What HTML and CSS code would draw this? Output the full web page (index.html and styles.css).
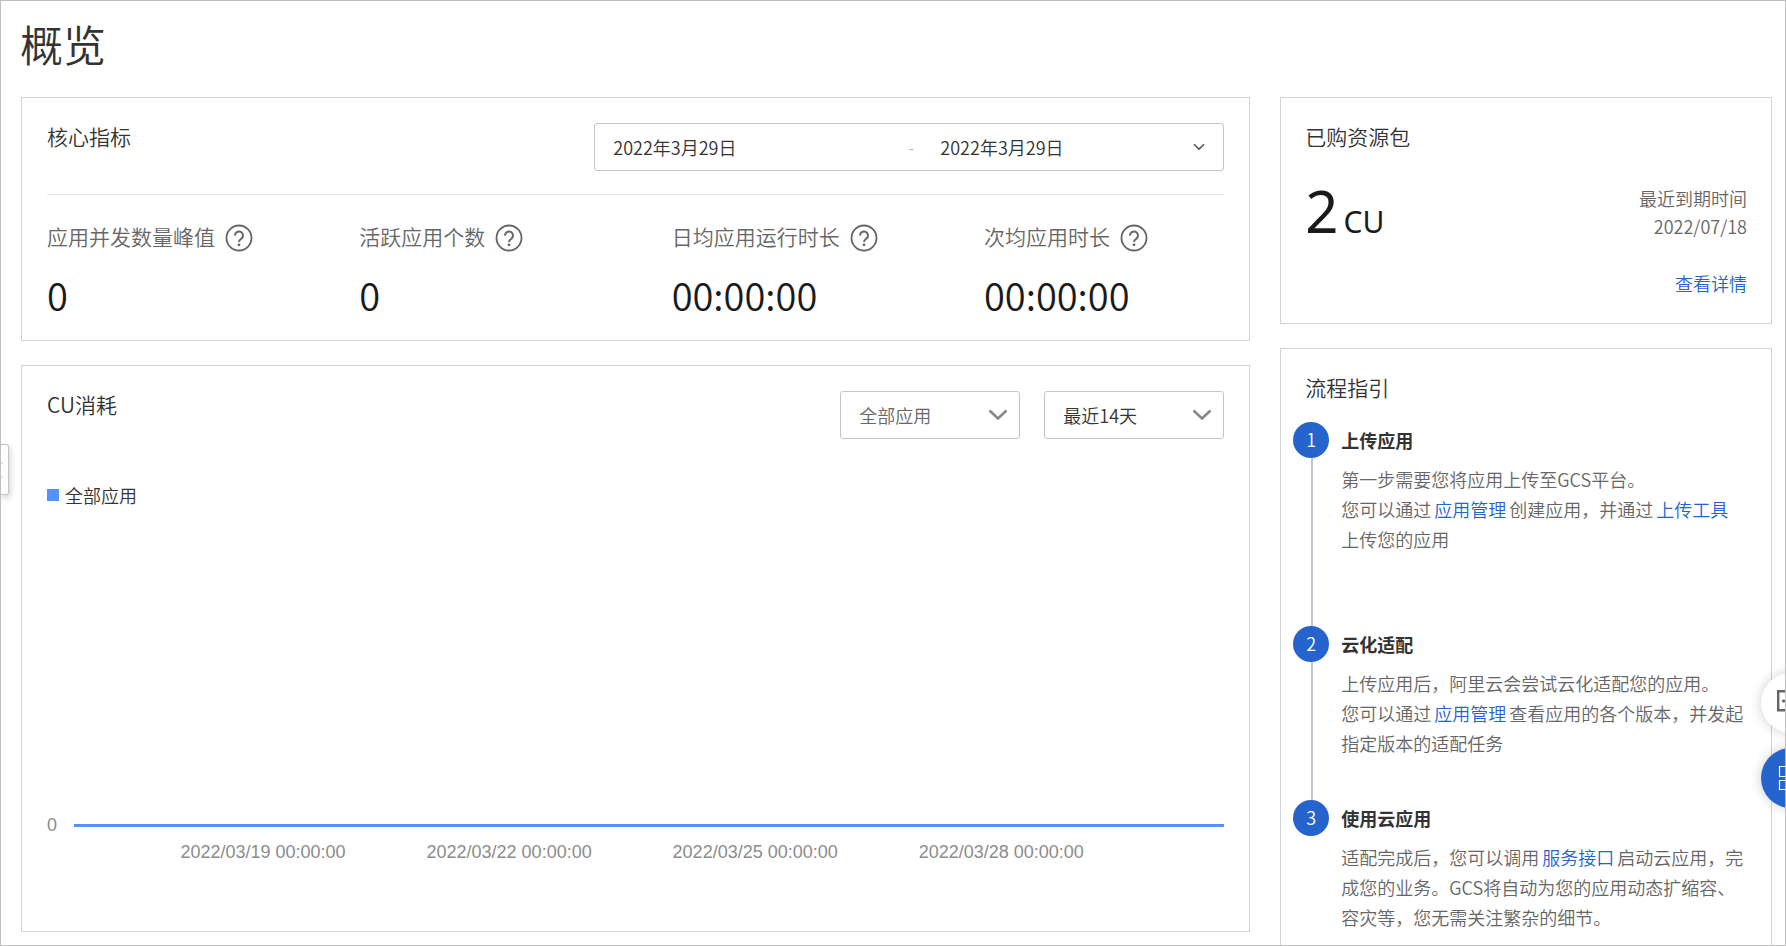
FILE: index.html
```html
<!DOCTYPE html>
<html lang="zh-CN">
<head>
<meta charset="utf-8">
<title>概览</title>
<link rel="stylesheet" href="styles.css">
</head>
<body>
<svg class="sprite" aria-hidden="true">
  <symbol id="help" viewBox="0 0 28 28">
    <circle cx="14" cy="14" r="12.5" fill="none" stroke="currentColor" stroke-width="1.8"/>
    <path d="M10 11.600a4 4 0 1 1 6.200 3.200c-1.400 1-2.200 1.600-2.200 3.200" fill="none" stroke="currentColor" stroke-width="2"/>
    <circle cx="14" cy="20.800" r="1.400" fill="currentColor"/>
  </symbol>
  <symbol id="chevron" viewBox="0 0 20 12">
    <path d="M1.500 1.500 10 9.500l8.500-8" fill="none" stroke="currentColor" stroke-width="2.600"/>
  </symbol>
</svg>
<div class="page">
  <h1 class="page-title">概览</h1>
  <div class="columns">
    <main class="main">
      <section class="card metrics">
        <header class="card-head metrics-head">
          <h2 class="card-title">核心指标</h2>
          <div class="range">
            <input class="range-input range-start" type="text" aria-label="开始日期" value="2022年3月29日">
            <span class="range-dash">-</span>
            <input class="range-input range-end" type="text" aria-label="结束日期" value="2022年3月29日">
            <svg class="range-icon"><use href="#chevron"/></svg>
          </div>
        </header>
        <dl class="stats">
          <div><dt>应用并发数量峰值<button class="help" type="button" aria-label="说明"><svg><use href="#help"/></svg></button></dt><dd>0</dd></div>
          <div><dt>活跃应用个数<button class="help" type="button" aria-label="说明"><svg><use href="#help"/></svg></button></dt><dd>0</dd></div>
          <div><dt>日均应用运行时长<button class="help" type="button" aria-label="说明"><svg><use href="#help"/></svg></button></dt><dd>00:00:00</dd></div>
          <div><dt>次均应用时长<button class="help" type="button" aria-label="说明"><svg><use href="#help"/></svg></button></dt><dd>00:00:00</dd></div>
        </dl>
      </section>
      <section class="card usage">
        <header class="card-head">
          <h2 class="card-title">CU消耗</h2>
          <div class="filters">
            <label class="select"><select class="muted" aria-label="应用"><option>全部应用</option></select><svg><use href="#chevron"/></svg></label>
            <label class="select"><select aria-label="时间范围"><option>最近14天</option></select><svg><use href="#chevron"/></svg></label>
          </div>
        </header>
        <div class="legend"><span class="swatch"></span>全部应用</div>
        <div class="chart">
          <div class="plot"><span class="tick">0</span><span class="line"></span></div>
          <div class="axis"><span>2022/03/19 00:00:00</span><span>2022/03/22 00:00:00</span><span>2022/03/25 00:00:00</span><span>2022/03/28 00:00:00</span></div>
        </div>
      </section>
    </main>
    <aside class="side">
      <section class="card package">
        <h2 class="card-title">已购资源包</h2>
        <div class="package-row">
          <p class="amount"><span class="amount-num">2</span>CU</p>
          <p class="expiry">最近到期时间<br>2022/07/18</p>
        </div>
        <a class="detail" href="#">查看详情</a>
      </section>
      <section class="card guide">
        <h2 class="card-title">流程指引</h2>
        <ol class="steps">
          <li class="step step-long">
            <span class="num">1</span>
            <div><h3>上传应用</h3><p>第一步需要您将应用上传至GCS平台。<br>您可以通过<a href="#">应用管理</a>创建应用，并通过<a href="#">上传工具</a>上传您的应用</p></div>
          </li>
          <li class="step">
            <span class="num">2</span>
            <div><h3>云化适配</h3><p>上传应用后，阿里云会尝试云化适配您的应用。<br>您可以通过<a href="#">应用管理</a>查看应用的各个版本，并发起指定版本的适配任务</p></div>
          </li>
          <li class="step">
            <span class="num">3</span>
            <div><h3>使用云应用</h3><p>适配完成后，您可以调用<a href="#">服务接口</a>启动云应用，完成您的业务。GCS将自动为您的应用动态扩缩容、容灾等，您无需关注繁杂的细节。</p></div>
          </li>
        </ol>
      </section>
    </aside>
  </div>
  <button class="drawer" type="button" aria-label="展开菜单"><svg viewBox="0 0 10 20"><path d="M0 3h2M0 17h2" stroke="#ccc" fill="none"/></svg></button>
  <div class="floats">
    <button class="float" type="button" aria-label="反馈"><svg viewBox="0 0 28 28" fill="none" stroke="#666" stroke-width="2.400"><path d="M1.200 2.200h25v19H1.200z"/><circle cx="6.500" cy="12" r="1.600" fill="#666" stroke="none"/><circle cx="13.500" cy="12" r="1.600" fill="#666" stroke="none"/></svg></button>
    <button class="float float-blue" type="button" aria-label="应用"><svg viewBox="0 0 28 28" fill="none" stroke="#fff" stroke-width="1.200"><path d="M2.500 2.500h10v10h-10zM2.500 16.500h10v9h-10zM16.500 2.500h9v10h-9zM16.500 16.500h9v9h-9z"/></svg></button>
  </div>
</div>
</body>
</html>
```
FILE: styles.css
```css
* { box-sizing: border-box; margin: 0; padding: 0; }
body { background: #fff; color: #333; font: 350 18px/28px "Noto Sans CJK SC", sans-serif; }
h1, h2 { font-weight: inherit; }
a { color: #2464cc; text-decoration: none; }
button { border: 0; background: none; color: inherit; }
.sprite { position: absolute; width: 0; height: 0; }
.page { position: relative; display: flex; flex-direction: column; min-height: 100vh; overflow: hidden; border: 1px solid #bfbfbf; }
.page-title { padding: 12px 19px 24px; font-size: 43px; line-height: 60px; }
.columns { flex: 1; display: grid; grid-template-columns: minmax(0, 5fr) minmax(0, 2fr); gap: 30px; padding: 0 13px 0 20px; }
.main, .side { display: flex; flex-direction: column; gap: 24px; }
.main { padding-bottom: 13px; }
.card { border: 1px solid #d2d3d8; padding: 25px 24px; }
.card-title { font-size: 21px; line-height: 27px; }
.card-head { display: flex; justify-content: space-between; }
.card.metrics { padding: 25px 25px 21px; }
.metrics-head { padding-bottom: 23px; border-bottom: 1px solid #e3e4e6; }
.range { display: flex; align-items: center; width: 630px; height: 48px; padding: 0 18px; border: 1px solid #c0c4cc; border-radius: 3px; }
.range-input { min-width: 0; border: 0; background: none; color: #333; font: inherit; }
.range-start { flex: 7; }
.range-end { flex: 6; }
.range-dash { width: 32px; color: #bbb; }
.range-icon { width: 12px; height: 8px; color: #555; }
.stats { display: grid; grid-template-columns: repeat(4, 1fr); gap: 72px; padding-top: 26px; }
.stats dt { display: flex; height: 34px; gap: 10px; color: #666; font-size: 21px; line-height: 30px; white-space: nowrap; }
.stats dd { margin-top: 16px; color: #1a1a1a; font-size: 38px; line-height: 48px; }
.help { display: flex; align-items: center; width: 28px; height: 34px; }
.help svg { width: 28px; height: 28px; }
.card.usage { flex: 1; display: flex; flex-direction: column; padding: 25px 25px 67px; }
.filters { display: flex; gap: 24px; }
.select { position: relative; display: block; width: 180px; height: 48px; }
.select select { width: 100%; height: 100%; padding: 0 18px; border: 1px solid #c0c4cc; border-radius: 3px; background: #fff; color: #333; font: inherit; appearance: none; }
.select .muted { color: #666; }
.select svg { position: absolute; right: 12px; top: 18px; width: 20px; height: 12px; color: #888; pointer-events: none; }
.legend { display: flex; align-items: center; gap: 6px; margin-top: 42px; }
.swatch { width: 12px; height: 12px; background: #5392ff; }
.chart { margin-top: auto; color: #8c8c8c; font: 18px/24px "Liberation Sans", sans-serif; }
.plot { display: flex; align-items: center; gap: 17px; }
.line { flex: 1; height: 3px; background: #5392ff; }
.axis { display: grid; grid-template-columns: repeat(4, 1fr); padding: 3px 100px 0 93px; text-align: center; white-space: nowrap; }
.package-row { display: flex; justify-content: space-between; align-items: flex-start; margin-top: 34px; }
.amount { display: flex; align-items: baseline; gap: 5px; color: #1a1a1a; font: 30px/30px "Noto Sans", sans-serif; }
.amount-num { font-size: 58px; line-height: 54px; }
.expiry { color: #666; text-align: right; }
.detail { display: block; margin-top: 29px; margin-bottom: 1px; text-align: right; }
.card.guide { flex: 1; border-bottom: 0; padding-bottom: 0; }
.steps { list-style: none; margin: 21px 0 0 -12px; }
.step { position: relative; display: grid; grid-template-columns: 36px 1fr; gap: 12px; padding-bottom: 42px; }
.step-long { padding-bottom: 72px; }
.step:last-child { padding-bottom: 11px; }
.step:not(:last-child)::before { content: ""; position: absolute; left: 18px; top: 36px; bottom: 0; width: 2px; background: #c0c4cc; }
.num { height: 36px; border-radius: 50%; background: #2464cc; color: #fff; text-align: center; line-height: 35px; }
.step h3 { font-size: 18px; line-height: 36px; font-weight: 700; }
.step p { margin-top: 6px; line-height: 30px; color: #666; }
.step a { margin: 0 3px; }
.drawer { position: absolute; left: 0; top: 443px; width: 8px; height: 51px; border: 1px solid #c0c4cc; border-left: 0; border-radius: 0 3px 3px 0; background: #fff; box-shadow: 1px 3px 6px #0003; }
.drawer svg { display: block; width: 10px; height: 20px; }
.floats { position: absolute; right: -36px; top: 672px; display: flex; flex-direction: column; gap: 15px; }
.float { display: flex; align-items: center; justify-content: center; width: 60px; height: 60px; border-radius: 50%; background: #fff; box-shadow: 0 0 12px #0003; }
.float svg { width: 28px; height: 28px; }
.float-blue { background: #2464cc; }
```
